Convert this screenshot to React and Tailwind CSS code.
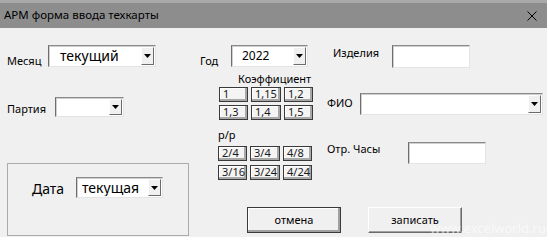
import React from 'react';

function DropBtn() {
    return (
        <div className="flex h-full w-[13px] items-center justify-center border border-t-[#fdfdfd] border-l-[#fdfdfd] border-r-[#6b6b6b] border-b-[#6b6b6b] bg-[#f0f0f0]">
            <svg width="7" height="4" viewBox="0 0 7 4"><path d="M0 0h7L3.5 4z" fill="#000" /></svg>
        </div>
    );
}

function Combo({ className, text, textClass }) {
    return (
        <div className={`flex bg-white border border-t-[#8a8a8a] border-l-[#6e6e6e] border-r-[#e4e4e4] border-b-[#e4e4e4] shadow-[inset_1px_1px_0_#cfcfcf] py-[1px] pr-[1px] ${className}`}>
            <div className={`flex-1 truncate text-black ${textClass}`}>{text}</div>
            <DropBtn />
        </div>
    );
}

function Field({ className }) {
    return <div className={`bg-white border border-t-[#8a8a8a] border-l-[#6e6e6e] border-r-[#e4e4e4] border-b-[#e4e4e4] shadow-[inset_1px_1px_0_#cfcfcf] ${className}`} />;
}

function Cell({ children }) {
    return (
        <div className="h-[15px] border border-[#3a3a3a] bg-[#f4f4f4] shadow-[inset_-2px_-2px_0_#a8a8a8,inset_1px_1px_0_#ffffff] pl-[3px] text-[11px] leading-[12px] text-[#1a1a1a]">
            {children}
        </div>
    );
}

export default function App() {
    const label = "text-[11px] leading-[13px] text-black";
    return (
        <div className="w-[550px] h-[242px] bg-white font-['Noto_Sans',sans-serif]">
            <div className="relative w-[547px] h-[237px] bg-[#f0f0f0] overflow-hidden">
                {/* Title bar */}
                <div className="flex items-start h-[28px] bg-[#8d8d8d] border-t-[3px] border-[#a9a9a9] pt-[4px] pl-[4px]">
                    <span className="text-[11.5px] leading-[16px] text-black">АРМ форма ввода техкарты</span>
                    <svg className="ml-auto mr-[10px] mt-[4px]" width="10" height="10" viewBox="0 0 10 10">
                        <path d="M0.5 0.5L9.5 9.5M9.5 0.5L0.5 9.5" stroke="#000" strokeWidth="1" />
                    </svg>
                </div>

                <div className="flex">
                    {/* Left column */}
                    <div className="w-[200px] pl-[7px] flex flex-col">
                        <div className="flex items-start mt-[17px]">
                            <span className={`${label} w-[41px] mt-[9px]`}>Месяц</span>
                            <Combo className="w-[108px] h-[22px]" text="текущий" textClass="text-[14px] leading-[18px] pl-[11px]" />
                        </div>
                        <div className="flex items-start mt-[30px]">
                            <span className={`${label} w-[48px] mt-[5px]`}>Партия</span>
                            <Combo className="w-[69px] h-[20px]" text="" textClass="" />
                        </div>
                        <div className="mt-[46px] w-[182px] h-[73px] border border-[#ababab] flex items-start pl-[24px] pt-[13px]">
                            <span className="w-[44px] mt-[3px] text-[14px] leading-[17px] text-black">Дата</span>
                            <Combo className="w-[87px] h-[21px]" text="текущая" textClass="text-[14px] leading-[17px] pl-[5px]" />
                        </div>
                    </div>

                    {/* Right area */}
                    <div className="flex flex-col">
                        <div className="flex items-start">
                            {/* Middle column */}
                            <div className="w-[127px] flex flex-col">
                                <div className="flex items-start mt-[17px]">
                                    <span className={`${label} w-[31px] mt-[9px]`}>Год</span>
                                    <Combo className="w-[77px] h-[22px]" text="2022" textClass="text-[12px] leading-[18px] pl-[10px]" />
                                </div>
                                <span className={`${label} mt-[5px] ml-[38px]`}>Коэффициент</span>
                                <div className="mt-[2px] ml-[19px] grid grid-cols-[29px_30px_29px] gap-[3px]">
                                    {['1', '1,15', '1,2', '1,3', '1,4', '1,5'].map((t) => <Cell key={t}>{t}</Cell>)}
                                </div>
                                <span className={`${label} mt-[8px] ml-[18px]`}>р/р</span>
                                <div className="mt-[5px] ml-[18px] grid grid-cols-[29px_30px_29px] gap-x-[3px] gap-y-[4px]">
                                    {['2/4', '3/4', '4/8', '3/16', '3/24', '4/24'].map((t) => <Cell key={t}>{t}</Cell>)}
                                </div>
                            </div>

                            {/* Right column */}
                            <div className="flex flex-col">
                                <div className="flex items-start mt-[17px]">
                                    <span className={`${label} w-[59px] ml-[6px] mt-[1px]`}>Изделия</span>
                                    <Field className="w-[78px] h-[23px]" />
                                </div>
                                <div className="flex items-start mt-[25px]">
                                    <span className={`${label} w-[33px] mt-[3px]`}>ФИО</span>
                                    <Combo className="w-[183px] h-[22px]" text="" textClass="" />
                                </div>
                                <div className="flex items-start mt-[27px]">
                                    <span className={`${label} w-[81px]`}>Отр. Часы</span>
                                    <Field className="w-[78px] h-[22px]" />
                                </div>
                            </div>
                        </div>

                        {/* Buttons */}
                        <div className="flex gap-[27px] mt-[27px] ml-[47px]">
                            <button className="w-[94px] h-[26px] border border-[#3a3a3a] bg-[#f0f0f0] shadow-[inset_-2px_-2px_0_#a0a0a0,inset_1px_1px_0_#ffffff] text-[11px] text-black">отмена</button>
                            <button className="w-[94px] h-[26px] bg-[#f0f0f0] border border-t-[#ffffff] border-l-[#ffffff] border-r-[#6a6a6a] border-b-[#6a6a6a] shadow-[inset_-1px_-1px_0_#a0a0a0] text-[11px] text-black">записать</button>
                        </div>
                    </div>
                </div>

                <span className="absolute left-[430px] top-[220px] text-[13px] leading-[16px] text-white/60">www.excelworld.ru</span>
            </div>
        </div>
    );
}
